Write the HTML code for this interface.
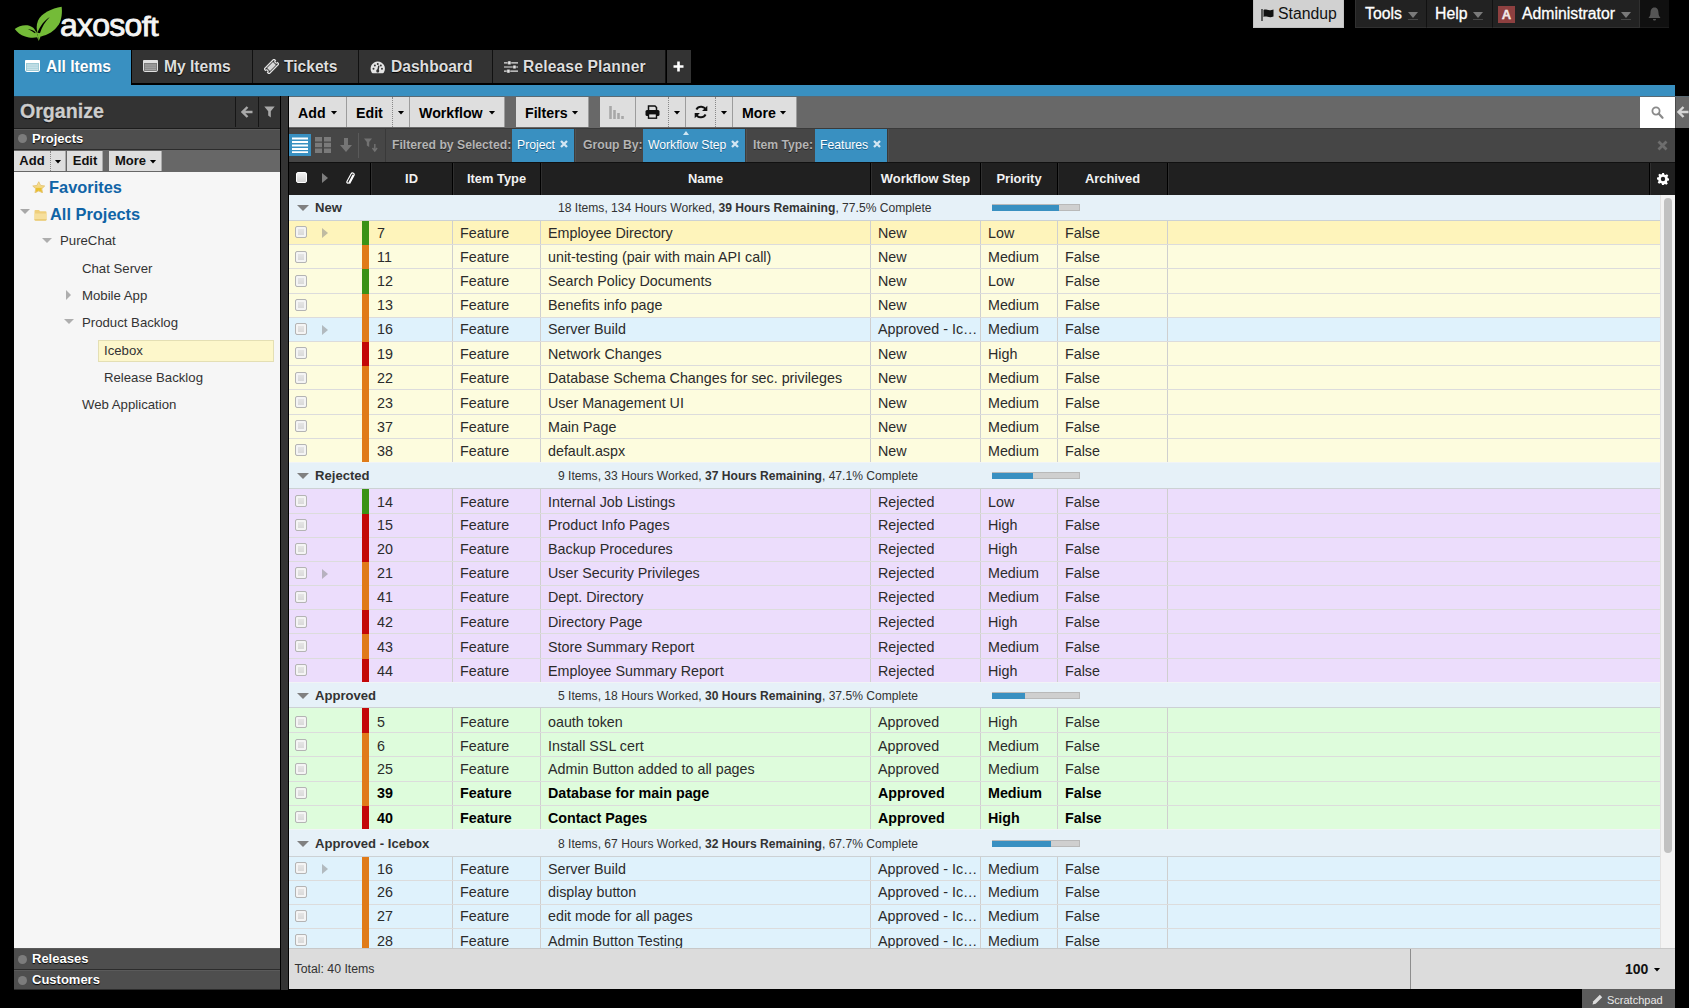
<!DOCTYPE html>
<html><head><meta charset="utf-8"><title>Axosoft</title>
<style>
*{box-sizing:border-box;margin:0;padding:0}
html,body{width:1689px;height:1008px;overflow:hidden;background:#000}
body{font-family:"Liberation Sans",sans-serif;position:relative;color:#222}
i{font-style:normal;display:block}
.abs{position:absolute}
/* ---- top bar ---- */
#logo{position:absolute;left:10px;top:0;width:160px;height:50px}
#logotxt{position:absolute;left:60px;top:7px;font-size:32px;line-height:36px;color:#f4f4f4;letter-spacing:-0.75px;-webkit-text-stroke:0.9px #f4f4f4}
.tb{position:absolute;top:0;height:28px;line-height:27px;font-size:15.8px;color:#fff;white-space:nowrap;-webkit-text-stroke:0.3px #fff}
#standup{-webkit-text-stroke:0 #000}
#standup{left:1253px;width:91px;background:#d1d1d1;color:#111;border:1px solid #c2c2c2;border-top:0}
#tools{left:1355px;width:72px;background:#222;border-right:1px solid #111;border-bottom:1px solid #303030;border-left:1px solid #303030}
#help{left:1427px;width:66px;background:#222;border-right:1px solid #111;border-bottom:1px solid #303030}
#admin{left:1493px;width:147px;background:#222;border-bottom:1px solid #303030;border-right:1px solid #303030}
#bell{left:1640px;width:29px;background:#101010;border-bottom:1px solid #1c1c1c}
.tb .dd::after{content:"";position:absolute;left:-5px;top:1px;width:10px;height:1px;background:#484848}
.tb .dd{position:absolute;top:12px;width:0;height:0;border:5px solid transparent;border-top:6px solid #7a7a7a;border-bottom:0}
/* ---- tabs ---- */
.tab{position:absolute;top:50px;height:33px;background:#333;color:#dedede;font-weight:bold;font-size:15.6px;line-height:34px;white-space:nowrap;border-right:1px solid #111;box-shadow:0 2px 0 #000;text-shadow:0 1px 1px #000}
.tab.on{background:#3990c1;color:#fff;height:46px;border:0;box-shadow:none;text-shadow:0 1px 1px #1c5f8a}
.tab span{position:absolute;top:0}
#bluebar{position:absolute;left:14px;top:85px;width:1661px;height:11px;background:#3990c1}
/* ---- left panel ---- */
#left{position:absolute;left:14px;top:97px;width:266px;height:893px;background:#f6f6f6;overflow:hidden}
#orgh{position:absolute;left:0;top:0;width:266px;height:32px;background:#333;border-bottom:1px solid #1c1c1c}
#orgh b{position:absolute;left:6px;top:-1px;font-size:19.6px;line-height:30px;color:#cdcdcd;-webkit-text-stroke:0.3px #cdcdcd;text-shadow:0 1px 1px #000}
.sec{position:absolute;left:0;width:266px;background:#4e4e4e;color:#fff;font-weight:bold;font-size:13px;border-top:1px solid #5a5a5a;border-bottom:1px solid #2c2c2c;text-shadow:0 1px 1px #000}
.sec i{position:absolute;left:4px;width:9px;height:9px;border-radius:5px;background:#7c7c7c}
.sec span{position:absolute;left:18px}
#ltb{position:absolute;left:0;top:53px;width:266px;height:22px;background:#676767}
.sb{position:absolute;top:1px;height:20px;background:#dedede;font-weight:bold;font-size:13px;line-height:20px;color:#111;text-align:center;border-right:1px solid #aaa}
.car{position:absolute;width:7px;height:4px;background:#000;clip-path:polygon(0 0,100% 0,50% 100%);margin-left:0.5px;margin-top:0.5px}
.tn{position:absolute;font-size:13.2px;color:#333;white-space:nowrap;line-height:18px}
.tn.big{font-size:16.4px;font-weight:bold;color:#1064a6;line-height:20px}
.ta-d{position:absolute;width:0;height:0;border:5px solid transparent;border-top:5px solid #aeaeae;border-bottom:0}
.ta-r{position:absolute;width:0;height:0;border:5px solid transparent;border-left:5px solid #aeaeae;border-right:0}
/* ---- main ---- */
#sep{position:absolute;left:281px;top:96px;width:7px;height:894px;background:#343434}
#mtb{position:absolute;left:289px;top:96px;width:1400px;height:32px;background:#686868;border-top:1px solid #5a6a74}
.mb{position:absolute;top:0;height:30px;background:#dedede;font-weight:bold;font-size:14.2px;line-height:32px;color:#000;white-space:nowrap;border-right:1px solid #9c9c9c}
.mb.dot{border-right:1px dotted #888}
.mb span{position:absolute;top:0}
#fbar{position:absolute;left:289px;top:128px;width:1386px;height:34px;background:#464646;border-top:1px solid #3a3a3a}
.fl{position:absolute;top:0;font-size:12.2px;font-weight:bold;color:#b4b4b4;line-height:32px;white-space:nowrap;text-shadow:0 1px 0 #222}
.chip{position:absolute;top:0;height:33px;background:#3990c1;box-shadow:1px 0 0 #3c3c3c,2px 0 0 #515151;color:#fff;font-size:12.2px;line-height:32px;white-space:nowrap;text-shadow:0 1px 0 #1c5f8a}
.chip span{position:absolute;left:5px;top:0}
.chip b{position:absolute;top:0;font-size:12px;color:#d8ecf8}
#ghead{position:absolute;left:289px;top:162px;width:1386px;height:33px;background:#202020;border-top:1px solid #111}
.hc{position:absolute;top:0;height:32px;border-right:1px solid #000;color:#f2f2f2;font-weight:bold;font-size:12.9px;line-height:31px;text-align:center;white-space:nowrap;box-shadow:1px 0 0 #2f2f2f}
#grid{position:absolute;left:289px;top:162px;width:1371px;height:786px;overflow:hidden}
.grp{position:absolute;left:0;width:1371px;background:#e6f1f8;border-bottom:1px solid #ccd1d4;box-shadow:0 -1px 0 #f1f4f6;line-height:24px;font-size:12.1px;color:#333;white-space:nowrap}
.grp .tri{position:absolute;left:8px;top:10px;width:0;height:0;border:6px solid transparent;border-top:6px solid #808080;border-bottom:0}
.grp .gn{position:absolute;left:26px;top:2px;font-size:13.1px;color:#333}
.grp .gs{position:absolute;left:269px;top:1px}
.grp .pb{position:absolute;left:703px;top:9px;width:88px;height:7px;background:#cfcfcf;border:1px solid #b9b9b9;border-left:0}
.grp .pb i{height:6px;margin-top:-0.5px;background:#3990c1}
.row{position:absolute;left:0;width:1371px;border-bottom:1px solid #dcdcdc;font-size:14.3px;color:#2b2b2b;white-space:nowrap}
.row.y{background:#fdfcde}.row.hl{background:#fef4bb}.row.b{background:#dff2fc}.row.p{background:#ecddfc}.row.g{background:#defcdc}
.row.bd{font-weight:bold;color:#000}
.row .c{position:absolute;top:0;height:100%;border-right:1px solid #cfcfcf;overflow:hidden;padding-left:7px;padding-top:inherit;line-height:16px}
.c1{left:82px;width:82px}.c2{left:164px;width:88px}.c3{left:252px;width:330px}.c4{left:582px;width:110px}.c5{left:692px;width:77px}.c6{left:769px;width:110px}
.row .c7{left:879px;width:492px;border:0}
.row .c1{padding-left:6px}
.cb{position:absolute;left:6px;width:12px;height:12px;background:linear-gradient(#e8e8e8,#d6d6d6);border:1px solid #b4b4b4;border-radius:2px;box-shadow:inset 0 0 0 2px #f4f4f4}
.ex{position:absolute;left:33px;width:0;height:0;border:5px solid transparent;border-left:6px solid rgba(140,140,140,.55);border-right:0}
.pri{position:absolute;left:73px;top:0;width:7px;height:calc(100% + 1px)}
#vsb{position:absolute;left:1660px;top:195px;width:15px;height:753px;background:#f3f3f3;border-left:1px solid #e2e2e2}
#vsb i{position:absolute;left:3px;top:3px;width:8px;height:655px;border-radius:4px;background:#c1c1c1}
#foot{position:absolute;left:289px;top:948px;width:1386px;height:41px;background:#dcdcdc;border-top:1px solid #c8c8c8;font-size:12.3px;color:#333}
#scr{position:absolute;left:1582px;top:989px;width:93px;height:19px;background:#5c5c5c;color:#e8e8e8;font-size:11px;line-height:22px}
</style></head>
<body>
<svg id="logo" viewBox="0 0 1689 528">
 <path d="M545 72 C440 90 330 140 295 220 C275 270 280 310 290 345 L322 387 C400 372 470 330 515 260 C548 200 552 130 545 72Z" fill="#74bb38"/>
 <path d="M420 180 C368 212 318 272 290 345 L316 352 C335 285 375 225 420 180Z" fill="#000"/>
 <path d="M50 305 C90 275 150 258 205 272 C238 282 258 302 268 326 C288 350 298 385 303 432 L286 394 C250 402 200 400 160 385 C110 368 75 340 50 305Z" fill="#74bb38"/>
 <path d="M188 306 C220 310 248 322 270 340 L264 352 C242 334 215 320 188 306Z" fill="#000"/>
 <path d="M268 326 C290 350 300 390 303 432 L322 387 L312 352 L290 345Z" fill="#74bb38"/>
</svg>
<div id="logotxt">axoso<span style="display:inline-block;transform:scaleY(.885);transform-origin:0 28.5px">ft</span></div>
<div class="tb" id="standup"><svg class="abs" style="left:7px;top:8px" width="13" height="13" viewBox="0 0 13 13"><path d="M1 1v12" stroke="#111" stroke-width="1.2"/><path d="M2.5 2 C5 0.5 7 3.5 12.5 1.5 V8.5 C8 10.5 5.5 7.5 2.5 9Z" fill="#111"/></svg><span class="abs" style="left:24px">Standup</span></div>
<div class="tb" id="tools"><span class="abs" style="left:9px">Tools</span><i class="dd" style="left:52px"></i></div>
<div class="tb" id="help"><span class="abs" style="left:8px">Help</span><i class="dd" style="left:46px"></i></div>
<div class="tb" id="admin"><i class="abs" style="left:5px;top:6px;width:17px;height:17px;background:#8e4040;color:#f0e4e4;font-size:13px;font-weight:bold;line-height:18px;text-align:center">A</i><span class="abs" style="left:29px">Administrator</span><i class="dd" style="left:128px"></i></div>
<div class="tb" id="bell"><svg class="abs" style="left:8px;top:7px" width="13" height="14" viewBox="0 0 13 14"><path d="M6.5 0.5 C9.5 0.5 10.5 3 10.5 6 C10.5 9 12 10 12.5 11 H0.5 C1 10 2.5 9 2.5 6 C2.5 3 3.5 0.5 6.5 0.5Z M5 12 H8 C8 13 7.4 13.6 6.5 13.6 C5.6 13.6 5 13 5 12Z" fill="#555"/></svg></div>
<div id="bluebar"></div>
<div class="tab on" style="left:14px;width:117px"><svg class="abs" style="left:11px;top:10px" width="15" height="12" viewBox="0 0 15 12"><rect x="0.5" y="0.5" width="14" height="11" rx="1.2" fill="#9fcbd6" stroke="#fff"/><rect x="0" y="0" width="15" height="3" rx="1" fill="#fff"/><path d="M2 5h11M2 7.1h11M2 9.2h11" stroke="#e3f1f5" stroke-width="0.9"/></svg><span style="left:32px">All Items</span></div>
<div class="tab" style="left:131px;width:122px;border-left:1px solid #000"><svg class="abs" style="left:11px;top:10px" width="15" height="12" viewBox="0 0 15 12"><rect x="0.5" y="0.5" width="14" height="11" rx="1.2" fill="#7d7d7d" stroke="#e0e0e0"/><rect x="0" y="0" width="15" height="3" rx="1" fill="#e0e0e0"/><path d="M2 5h11M2 7.1h11M2 9.2h11" stroke="#b8b8b8" stroke-width="0.9"/></svg><span style="left:32px">My Items</span></div>
<div class="tab" style="left:253px;width:106px"><svg class="abs" style="left:11px;top:9px" width="15" height="15" viewBox="0 0 15 15"><g transform="rotate(-45 7.5 7.5)"><path d="M0.5 4 H14.5 V6 A1.5 1.5 0 0 0 14.5 9 V11 H0.5 V9 A1.5 1.5 0 0 0 0.5 6Z" fill="none" stroke="#e4e4e4" stroke-width="1.3"/><rect x="3.3" y="5.4" width="8.4" height="4.2" fill="#d8d8d8"/></g></svg><span style="left:31px">Tickets</span></div>
<div class="tab" style="left:359px;width:134px"><svg class="abs" style="left:10.5px;top:11px" width="15.5" height="12.6" viewBox="0 0 17 14"><path d="M8.5 0.5 A8 8 0 0 0 1.6 12.5 Q2 13.5 3 13.5 H14 Q15 13.5 15.4 12.5 A8 8 0 0 0 8.5 0.5Z" fill="#e4e4e4"/><circle cx="3.8" cy="8.6" r="1.1" fill="#333"/><circle cx="5.3" cy="4.9" r="1.1" fill="#333"/><circle cx="8.5" cy="3.4" r="1.1" fill="#333"/><circle cx="11.9" cy="4.9" r="1.1" fill="#333"/><circle cx="13.2" cy="8.6" r="1.1" fill="#333"/><path d="M8.5 11.8 L9.6 5.8" stroke="#333" stroke-width="1.6" stroke-linecap="round"/><circle cx="8.5" cy="11" r="1.7" fill="#333"/></svg><span style="left:32px">Dashboard</span></div>
<div class="tab" style="left:493px;width:173px"><svg class="abs" style="left:11px;top:10px" width="14" height="14" viewBox="0 0 15 14"><path d="M0 2.5h15M0 7h15M0 11.5h15" stroke="#e4e4e4" stroke-width="1.3"/><rect x="4" y="0.5" width="3.4" height="4" rx="0.8" fill="#e4e4e4" stroke="#333" stroke-width="0.5"/><rect x="9.5" y="5" width="3.4" height="4" rx="0.8" fill="#e4e4e4" stroke="#333" stroke-width="0.5"/><rect x="3" y="9.5" width="3.4" height="4" rx="0.8" fill="#e4e4e4" stroke="#333" stroke-width="0.5"/></svg><span style="left:30px;letter-spacing:0.15px">Release Planner</span></div>
<div class="tab" style="left:667px;width:24px;border:0"><svg class="abs" style="left:6px;top:11px" width="11" height="11" viewBox="0 0 11 11"><path d="M5.5 0.5v10M0.5 5.5h10" stroke="#fff" stroke-width="2.6"/></svg></div>
<i class="abs" style="left:14px;top:96px;width:266px;height:1px;background:#2c3d48"></i>
<div id="left">
 <div id="orgh"><b>Organize</b>
  <i class="abs" style="left:221px;top:0;width:1px;height:30px;background:#161616"></i><i class="abs" style="left:244px;top:0;width:1px;height:30px;background:#161616"></i>
  <svg class="abs" style="left:227px;top:9px" width="12" height="12" viewBox="0 0 12 12"><path d="M6.5 1 L1.5 6 L6.5 11 M2 6 H11.5" fill="none" stroke="#a9a9a9" stroke-width="2.4"/></svg>
  <svg class="abs" style="left:250px;top:9px" width="11" height="12" viewBox="0 0 11 12"><path d="M0.3 0.5 H10.7 L6.8 5.2 V11.5 L4.2 9.6 V5.2Z" fill="#a9a9a9"/></svg>
 </div>
 <div class="sec" style="top:32px;height:21px;line-height:17px"><i style="top:4px"></i><span>Projects</span></div>
 <div id="ltb">
  <div class="sb" style="left:0;width:37px;border-right:1px dotted #888">Add</div>
  <div class="sb" style="left:37px;width:15px"><i class="car" style="left:3px;top:8px"></i></div>
  <div class="sb" style="left:53px;width:36px;padding-left:1px">Edit</div>
  <div class="sb" style="left:95px;width:53px;text-align:left;padding-left:6px">More<i class="car" style="left:40px;top:8px"></i></div>
 </div>
 <!-- tree -->
 <svg class="abs" style="left:18px;top:83.5px" width="13.5" height="12.5" viewBox="0 0 14 13"><defs><linearGradient id="sg" x1="0" y1="0" x2="0" y2="1"><stop offset="0" stop-color="#f8e6ad"/><stop offset="0.52" stop-color="#f3d57a"/><stop offset="0.56" stop-color="#ebc22e"/><stop offset="1" stop-color="#e9bd28"/></linearGradient></defs><path d="M7 0.8 L8.9 4.6 L13.2 5.2 L10.1 8.1 L10.9 12.3 L7 10.3 L3.1 12.3 L3.9 8.1 L0.8 5.2 L5.1 4.6Z" fill="url(#sg)" stroke="#e6c678" stroke-width="1" stroke-linejoin="round"/></svg>
 <div class="tn big" style="left:35px;top:80px">Favorites</div>
 <i class="ta-d" style="left:6px;top:112px;border-top-color:#a8a8a8"></i>
 <svg class="abs" style="left:20px;top:112px" width="13" height="12" viewBox="0 0 13 12"><path d="M0.5 2 Q0.5 1 1.5 1 H5 L6 2.3 H11.5 Q12.5 2.3 12.5 3.3 V10.5 Q12.5 11.5 11.5 11.5 H1.5 Q0.5 11.5 0.5 10.5Z" fill="#efcf7c"/><path d="M0.5 4.6 H12.5 V10.5 Q12.5 11.5 11.5 11.5 H1.5 Q0.5 11.5 0.5 10.5Z" fill="#f6df9c"/><path d="M0.5 10.2 H12.5 V10.5 Q12.5 11.5 11.5 11.5 H1.5 Q0.5 11.5 0.5 10.5Z" fill="#e6c66e"/></svg>
 <div class="tn big" style="left:36px;top:107px">All Projects</div>
 <i class="ta-d" style="left:28px;top:141px"></i><div class="tn" style="left:46px;top:135px">PureChat</div>
 <div class="tn" style="left:68px;top:163px">Chat Server</div>
 <i class="ta-r" style="left:52px;top:193px"></i><div class="tn" style="left:68px;top:190px">Mobile App</div>
 <i class="ta-d" style="left:50px;top:222px"></i><div class="tn" style="left:68px;top:217px">Product Backlog</div>
 <i class="abs" style="left:84px;top:243px;width:176px;height:22px;background:#fdf7cb;border:1px solid #e4dfb4"></i>
 <div class="tn" style="left:90px;top:245px">Icebox</div>
 <div class="tn" style="left:90px;top:272px">Release Backlog</div>
 <div class="tn" style="left:68px;top:299px">Web Application</div>
 <div class="sec" style="top:851px;height:22px;line-height:19px"><i style="top:6px"></i><span>Releases</span></div>
 <div class="sec" style="top:873px;height:20px;line-height:18px"><i style="top:5px"></i><span>Customers</span></div>
</div>
<div id="sep"></div>
<div id="mtb">
 <div class="mb" style="left:0;width:58px"><span style="left:9px">Add</span><i class="car" style="left:41px;top:13px"></i></div>
 <div class="mb dot" style="left:58px;width:46px"><span style="left:9px">Edit</span></div>
 <div class="mb" style="left:104px;width:17px"><i class="car" style="left:4px;top:13px"></i></div>
 <div class="mb" style="left:121px;width:95px"><span style="left:9px">Workflow</span><i class="car" style="left:78px;top:13px"></i></div>
 <div class="mb" style="left:227px;width:73px"><span style="left:9px">Filters</span><i class="car" style="left:55px;top:13px"></i></div>
 <div class="mb" style="left:311px;width:36px"><svg class="abs" style="left:9px;top:9px" width="17" height="13" viewBox="0 0 17 13"><path d="M1.5 0v13M5.5 4v9M9.5 7v6M13.5 10v3" stroke="#a8a8a8" stroke-width="2.6"/></svg></div>
 <div class="mb dot" style="left:347px;width:33px"><svg class="abs" style="left:9px;top:8px" width="15" height="14" viewBox="0 0 15 14"><path d="M3.5 5 V1 H10 L11.5 2.5 V5" fill="#dedede" stroke="#111" stroke-width="1.5"/><rect x="0.5" y="5" width="14" height="6" rx="1.5" fill="#111"/><rect x="3.5" y="8.7" width="8" height="4.5" fill="#dedede" stroke="#111" stroke-width="1.4"/></svg></div>
 <div class="mb" style="left:380px;width:17px"><i class="car" style="left:4px;top:13px"></i></div>
 <div class="mb dot" style="left:397px;width:30px"><svg class="abs" style="left:8px;top:8px" width="14" height="14" viewBox="0 0 14 14"><path d="M12 5.2 A5.3 5.3 0 0 0 2.4 4.4" fill="none" stroke="#111" stroke-width="2"/><path d="M13.3 0.8 V6 H8.1Z" fill="#111"/><path d="M2 8.8 A5.3 5.3 0 0 0 11.6 9.6" fill="none" stroke="#111" stroke-width="2"/><path d="M0.7 13.2 V8 H5.9Z" fill="#111"/></svg></div>
 <div class="mb" style="left:427px;width:17px"><i class="car" style="left:4px;top:13px"></i></div>
 <div class="mb" style="left:444px;width:64px"><span style="left:9px">More</span><i class="car" style="left:46px;top:13px"></i></div>
 <div class="abs" style="left:1351px;top:0;width:35px;height:31px;background:#fff"><svg class="abs" style="left:11px;top:9px" width="13" height="13" viewBox="0 0 13 13"><circle cx="5" cy="5" r="3.6" fill="none" stroke="#8a8a8a" stroke-width="1.8"/><path d="M7.6 7.6 L11.5 11.8" stroke="#8a8a8a" stroke-width="2.2" stroke-linecap="round"/></svg></div>
 <div class="abs" style="left:1386px;top:0;width:1px;height:31px;background:#4a4a4a"></div>
 <svg class="abs" style="left:1388px;top:9px" width="12" height="12" viewBox="0 0 12 12"><path d="M6.5 1 L1.5 6 L6.5 11 M2 6 H11.5" fill="none" stroke="#d6d6d6" stroke-width="2.4"/></svg>
</div>
<div id="fbar">
 <i class="abs" style="left:0;top:5px;width:22px;height:22px;background:#3990c1"></i>
 <svg class="abs" style="left:3px;top:8px" width="16" height="16" viewBox="0 0 16 16"><path d="M0 1.5h16M0 5h16M0 8.5h16M0 12h16M0 15.3h16" stroke="#fff" stroke-width="2"/></svg>
 <svg class="abs" style="left:26px;top:8px" width="16" height="16" viewBox="0 0 16 16"><path d="M0 0h7v4.5h-7zM9 0h7v4.5h-7zM0 5.8h7v4.5h-7zM9 5.8h7v4.5h-7zM0 11.5h7v4.5h-7zM9 11.5h7v4.5h-7z" fill="#7a7a7a"/></svg>
 <svg class="abs" style="left:51px;top:9px" width="12" height="14" viewBox="0 0 12 14"><path d="M4 0 H8 V7 H12 L6 14 L0 7 H4Z" fill="#757575"/></svg>
 <i class="abs" style="left:69px;top:4px;width:1px;height:25px;background:#5a5a5a"></i>
 <svg class="abs" style="left:75px;top:9px" width="15" height="15" viewBox="0 0 15 15"><path d="M0 0.5 H8 L5.2 4 V9 L2.8 7.6 V4Z" fill="#727272"/><path d="M10.8 6 V12.5 M8.5 10 L10.8 13 L13.1 10" fill="none" stroke="#727272" stroke-width="1.4"/></svg>
 <i class="abs" style="left:96px;top:0;width:1px;height:33px;background:#393939"></i>
 <div class="fl" style="left:103px">Filtered by Selected:</div>
 <div class="chip" style="left:223px;width:62px"><span>Project</span><svg class="abs" style="left:48px;top:11px" width="8" height="8" viewBox="0 0 8 8"><path d="M1 1 L7 7 M7 1 L1 7" stroke="#d3e6f3" stroke-width="2.3"/></svg></div>
 <div class="fl" style="left:294px">Group By:</div>
 <div class="chip" style="left:354px;width:102px"><span>Workflow Step</span><svg class="abs" style="left:88px;top:11px" width="8" height="8" viewBox="0 0 8 8"><path d="M1 1 L7 7 M7 1 L1 7" stroke="#d3e6f3" stroke-width="2.3"/></svg><i class="abs" style="left:40px;top:2px;width:0;height:0;border:3px solid transparent;border-bottom:4px solid #cfe6f3;border-top:0"></i></div>
 <div class="fl" style="left:464px">Item Type:</div>
 <div class="chip" style="left:526px;width:72px"><span>Features</span><svg class="abs" style="left:58px;top:11px" width="8" height="8" viewBox="0 0 8 8"><path d="M1 1 L7 7 M7 1 L1 7" stroke="#d3e6f3" stroke-width="2.3"/></svg></div>
 <i class="abs" style="left:598px;top:0;width:1px;height:33px;background:#393939"></i>
 <svg class="abs" style="left:1368px;top:11px" width="11" height="11" viewBox="0 0 11 11"><path d="M1.5 1.5 L9.5 9.5 M9.5 1.5 L1.5 9.5" stroke="#6e6e6e" stroke-width="2.8"/></svg>
</div>
<div id="grid">
<div class="grp" style="top:33px;height:26px"><i class="tri" style="top:10px"></i><b class="gn" style="top:1px">New</b><span class="gs" style="top:1px">18 Items, 134 Hours Worked, <b>39 Hours Remaining</b>, 77.5% Complete</span><span class="pb" style="top:9px"><i style="width:77.5%"></i></span></div>
<div class="row hl" style="top:59px;height:24px;padding-top:4px"><i class="cb" style="top:5px"></i><i class="ex" style="top:7px"></i><i class="pri" style="background:#3a9216"></i><span class="c c1">7</span><span class="c c2">Feature</span><span class="c c3">Employee Directory</span><span class="c c4">New</span><span class="c c5">Low</span><span class="c c6">False</span><span class="c c7"></span></div>
<div class="row y" style="top:83px;height:24px;padding-top:4px"><i class="cb" style="top:6px"></i><i class="pri" style="background:#e07b18"></i><span class="c c1">11</span><span class="c c2">Feature</span><span class="c c3">unit-testing (pair with main API call)</span><span class="c c4">New</span><span class="c c5">Medium</span><span class="c c6">False</span><span class="c c7"></span></div>
<div class="row y" style="top:107px;height:25px;padding-top:4px"><i class="cb" style="top:6px"></i><i class="pri" style="background:#3a9216"></i><span class="c c1">12</span><span class="c c2">Feature</span><span class="c c3">Search Policy Documents</span><span class="c c4">New</span><span class="c c5">Low</span><span class="c c6">False</span><span class="c c7"></span></div>
<div class="row y" style="top:132px;height:24px;padding-top:3px"><i class="cb" style="top:5px"></i><i class="pri" style="background:#e07b18"></i><span class="c c1">13</span><span class="c c2">Feature</span><span class="c c3">Benefits info page</span><span class="c c4">New</span><span class="c c5">Medium</span><span class="c c6">False</span><span class="c c7"></span></div>
<div class="row b" style="top:156px;height:24px;padding-top:3px"><i class="cb" style="top:5px"></i><i class="ex" style="top:7px"></i><i class="pri" style="background:#e07b18"></i><span class="c c1">16</span><span class="c c2">Feature</span><span class="c c3">Server Build</span><span class="c c4">Approved - Ic&hellip;</span><span class="c c5">Medium</span><span class="c c6">False</span><span class="c c7"></span></div>
<div class="row y" style="top:180px;height:24px;padding-top:4px"><i class="cb" style="top:5px"></i><i class="pri" style="background:#c30808"></i><span class="c c1">19</span><span class="c c2">Feature</span><span class="c c3">Network Changes</span><span class="c c4">New</span><span class="c c5">High</span><span class="c c6">False</span><span class="c c7"></span></div>
<div class="row y" style="top:204px;height:24px;padding-top:4px"><i class="cb" style="top:6px"></i><i class="pri" style="background:#e07b18"></i><span class="c c1">22</span><span class="c c2">Feature</span><span class="c c3">Database Schema Changes for sec. privileges</span><span class="c c4">New</span><span class="c c5">Medium</span><span class="c c6">False</span><span class="c c7"></span></div>
<div class="row y" style="top:228px;height:25px;padding-top:5px"><i class="cb" style="top:6px"></i><i class="pri" style="background:#e07b18"></i><span class="c c1">23</span><span class="c c2">Feature</span><span class="c c3">User Management UI</span><span class="c c4">New</span><span class="c c5">Medium</span><span class="c c6">False</span><span class="c c7"></span></div>
<div class="row y" style="top:253px;height:24px;padding-top:4px"><i class="cb" style="top:5px"></i><i class="pri" style="background:#e07b18"></i><span class="c c1">37</span><span class="c c2">Feature</span><span class="c c3">Main Page</span><span class="c c4">New</span><span class="c c5">Medium</span><span class="c c6">False</span><span class="c c7"></span></div>
<div class="row y" style="top:277px;height:24px;padding-top:4px"><i class="cb" style="top:5px"></i><i class="pri" style="background:#e07b18"></i><span class="c c1">38</span><span class="c c2">Feature</span><span class="c c3">default.aspx</span><span class="c c4">New</span><span class="c c5">Medium</span><span class="c c6">False</span><span class="c c7"></span></div>
<div class="grp" style="top:301px;height:26px"><i class="tri" style="top:10px"></i><b class="gn" style="top:1px">Rejected</b><span class="gs" style="top:1px">9 Items, 33 Hours Worked, <b>37 Hours Remaining</b>, 47.1% Complete</span><span class="pb" style="top:9px"><i style="width:47.1%"></i></span></div>
<div class="row p" style="top:327px;height:25px;padding-top:5px"><i class="cb" style="top:6px"></i><i class="pri" style="background:#3a9216"></i><span class="c c1">14</span><span class="c c2">Feature</span><span class="c c3">Internal Job Listings</span><span class="c c4">Rejected</span><span class="c c5">Low</span><span class="c c6">False</span><span class="c c7"></span></div>
<div class="row p" style="top:352px;height:24px;padding-top:3px"><i class="cb" style="top:5px"></i><i class="pri" style="background:#c30808"></i><span class="c c1">15</span><span class="c c2">Feature</span><span class="c c3">Product Info Pages</span><span class="c c4">Rejected</span><span class="c c5">High</span><span class="c c6">False</span><span class="c c7"></span></div>
<div class="row p" style="top:376px;height:24px;padding-top:3px"><i class="cb" style="top:5px"></i><i class="pri" style="background:#c30808"></i><span class="c c1">20</span><span class="c c2">Feature</span><span class="c c3">Backup Procedures</span><span class="c c4">Rejected</span><span class="c c5">High</span><span class="c c6">False</span><span class="c c7"></span></div>
<div class="row p" style="top:400px;height:24px;padding-top:3px"><i class="cb" style="top:5px"></i><i class="ex" style="top:7px"></i><i class="pri" style="background:#e07b18"></i><span class="c c1">21</span><span class="c c2">Feature</span><span class="c c3">User Security Privileges</span><span class="c c4">Rejected</span><span class="c c5">Medium</span><span class="c c6">False</span><span class="c c7"></span></div>
<div class="row p" style="top:424px;height:24px;padding-top:3px"><i class="cb" style="top:5px"></i><i class="pri" style="background:#e07b18"></i><span class="c c1">41</span><span class="c c2">Feature</span><span class="c c3">Dept. Directory</span><span class="c c4">Rejected</span><span class="c c5">Medium</span><span class="c c6">False</span><span class="c c7"></span></div>
<div class="row p" style="top:448px;height:24px;padding-top:4px"><i class="cb" style="top:6px"></i><i class="pri" style="background:#c30808"></i><span class="c c1">42</span><span class="c c2">Feature</span><span class="c c3">Directory Page</span><span class="c c4">Rejected</span><span class="c c5">High</span><span class="c c6">False</span><span class="c c7"></span></div>
<div class="row p" style="top:472px;height:25px;padding-top:5px"><i class="cb" style="top:6px"></i><i class="pri" style="background:#e07b18"></i><span class="c c1">43</span><span class="c c2">Feature</span><span class="c c3">Store Summary Report</span><span class="c c4">Rejected</span><span class="c c5">Medium</span><span class="c c6">False</span><span class="c c7"></span></div>
<div class="row p" style="top:497px;height:24px;padding-top:4px"><i class="cb" style="top:5px"></i><i class="pri" style="background:#c30808"></i><span class="c c1">44</span><span class="c c2">Feature</span><span class="c c3">Employee Summary Report</span><span class="c c4">Rejected</span><span class="c c5">High</span><span class="c c6">False</span><span class="c c7"></span></div>
<div class="grp" style="top:521px;height:25px"><i class="tri" style="top:10px"></i><b class="gn" style="top:1px">Approved</b><span class="gs" style="top:1px">5 Items, 18 Hours Worked, <b>30 Hours Remaining</b>, 37.5% Complete</span><span class="pb" style="top:9px"><i style="width:37.5%"></i></span></div>
<div class="row g" style="top:546px;height:25px;padding-top:6px"><i class="cb" style="top:8px"></i><i class="pri" style="background:#c30808"></i><span class="c c1">5</span><span class="c c2">Feature</span><span class="c c3">oauth token</span><span class="c c4">Approved</span><span class="c c5">High</span><span class="c c6">False</span><span class="c c7"></span></div>
<div class="row g" style="top:571px;height:24px;padding-top:5px"><i class="cb" style="top:6px"></i><i class="pri" style="background:#e07b18"></i><span class="c c1">6</span><span class="c c2">Feature</span><span class="c c3">Install SSL cert</span><span class="c c4">Approved</span><span class="c c5">Medium</span><span class="c c6">False</span><span class="c c7"></span></div>
<div class="row g" style="top:595px;height:25px;padding-top:4px"><i class="cb" style="top:6px"></i><i class="pri" style="background:#e07b18"></i><span class="c c1">25</span><span class="c c2">Feature</span><span class="c c3">Admin Button added to all pages</span><span class="c c4">Approved</span><span class="c c5">Medium</span><span class="c c6">False</span><span class="c c7"></span></div>
<div class="row g bd" style="top:620px;height:24px;padding-top:3px"><i class="cb" style="top:5px"></i><i class="pri" style="background:#e07b18"></i><span class="c c1">39</span><span class="c c2">Feature</span><span class="c c3">Database for main page</span><span class="c c4">Approved</span><span class="c c5">Medium</span><span class="c c6">False</span><span class="c c7"></span></div>
<div class="row g bd" style="top:644px;height:24px;padding-top:4px"><i class="cb" style="top:5px"></i><i class="pri" style="background:#c30808"></i><span class="c c1">40</span><span class="c c2">Feature</span><span class="c c3">Contact Pages</span><span class="c c4">Approved</span><span class="c c5">High</span><span class="c c6">False</span><span class="c c7"></span></div>
<div class="grp" style="top:668px;height:27px"><i class="tri" style="top:11px"></i><b class="gn" style="top:2px">Approved - Icebox</b><span class="gs" style="top:2px">8 Items, 67 Hours Worked, <b>32 Hours Remaining</b>, 67.7% Complete</span><span class="pb" style="top:10px"><i style="width:67.7%"></i></span></div>
<div class="row b" style="top:695px;height:24px;padding-top:4px"><i class="cb" style="top:5px"></i><i class="ex" style="top:7px"></i><i class="pri" style="background:#e07b18"></i><span class="c c1">16</span><span class="c c2">Feature</span><span class="c c3">Server Build</span><span class="c c4">Approved - Ic&hellip;</span><span class="c c5">Medium</span><span class="c c6">False</span><span class="c c7"></span></div>
<div class="row b" style="top:719px;height:24px;padding-top:3px"><i class="cb" style="top:5px"></i><i class="pri" style="background:#e07b18"></i><span class="c c1">26</span><span class="c c2">Feature</span><span class="c c3">display button</span><span class="c c4">Approved - Ic&hellip;</span><span class="c c5">Medium</span><span class="c c6">False</span><span class="c c7"></span></div>
<div class="row b" style="top:743px;height:24px;padding-top:3px"><i class="cb" style="top:5px"></i><i class="pri" style="background:#e07b18"></i><span class="c c1">27</span><span class="c c2">Feature</span><span class="c c3">edit mode for all pages</span><span class="c c4">Approved - Ic&hellip;</span><span class="c c5">Medium</span><span class="c c6">False</span><span class="c c7"></span></div>
<div class="row b" style="top:767px;height:24px;padding-top:4px"><i class="cb" style="top:5px"></i><i class="pri" style="background:#e07b18"></i><span class="c c1">28</span><span class="c c2">Feature</span><span class="c c3">Admin Button Testing</span><span class="c c4">Approved - Ic&hellip;</span><span class="c c5">Medium</span><span class="c c6">False</span><span class="c c7"></span></div>
</div>
<div id="ghead">
 <div class="hc" style="left:0;width:82px">
  <i class="abs" style="left:7px;top:9px;width:11px;height:11px;background:linear-gradient(#f2f2f2,#d2d2d2);border:1px solid #fff;border-radius:2px"></i>
  <i class="abs" style="left:33px;top:10px;width:0;height:0;border:5px solid transparent;border-left:6px solid #7e7e7e;border-right:0"></i>
  <svg class="abs" style="left:56px;top:9px" width="10" height="14" viewBox="0 0 10 14"><path d="M7.8 3.2 L4.2 10.2 Q3.4 11.6 2.4 11 Q1.4 10.4 2.2 9 L6 2 Q7 0.4 8.4 1.2 Q9.8 2 8.8 3.8 L4.8 11.2" fill="none" stroke="#fff" stroke-width="1.2" stroke-linecap="round"/></svg>
 </div>
 <div class="hc" style="left:82px;width:82px">ID</div>
 <div class="hc" style="left:164px;width:88px">Item Type</div>
 <div class="hc" style="left:252px;width:330px">Name</div>
 <div class="hc" style="left:582px;width:110px">Workflow Step</div>
 <div class="hc" style="left:692px;width:77px">Priority</div>
 <div class="hc" style="left:769px;width:110px">Archived</div>
 <div class="hc" style="left:879px;width:482px"></div>
 <svg class="abs" style="left:1368px;top:10px" width="12" height="12" viewBox="0 0 12 12"><path d="M5 0h2l.3 1.6 1.2.5L9.9 1.2l1.4 1.4-.9 1.4.5 1.2L12 5.5v2l-1.6.3-.5 1.2.9 1.4-1.4 1.4-1.4-.9-1.2.5L7 12H5l-.3-1.6-1.2-.5-1.4.9L.7 9.4l.9-1.4-.5-1.2L0 6.500v-2l1.600-.3.5-1.200L1.200 2.100 2.600.7l1.400.9 1.200-.5z M6 3.800a2.200 2.200 0 1 0 0 4.400 2.200 2.200 0 0 0 0-4.400z" fill="#fff" fill-rule="evenodd"/></svg>
</div>
<div id="vsb"><i></i></div>
<div id="foot"><span class="abs" style="left:5.5px;top:13px">Total: 40 Items</span><i class="abs" style="left:1121px;top:0;width:1px;height:40px;background:#8e8e8e"></i><b class="abs" style="left:1336px;top:12px;font-size:14px;color:#111">100</b><i class="car" style="left:1364px;top:18px"></i></div>
<div id="scr"><svg class="abs" style="left:10px;top:5px" width="11" height="11" viewBox="0 0 11 11"><path d="M0.5 10.5 L1.3 7.3 L7.8 0.8 L10.2 3.2 L3.7 9.7Z" fill="#dcdcdc"/></svg><span class="abs" style="left:25px;top:0">Scratchpad</span></div>
</body></html>
